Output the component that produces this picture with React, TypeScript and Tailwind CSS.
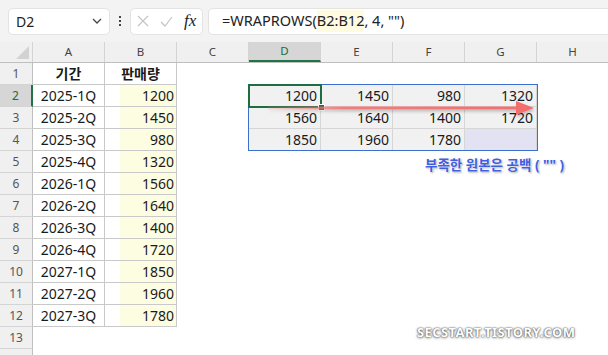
import React from "react";

const cols = ["A", "B", "C", "D", "E", "F", "G", "H"];

const sales: [string, number][] = [
  ["2025-1Q", 1200],
  ["2025-2Q", 1450],
  ["2025-3Q", 980],
  ["2025-4Q", 1320],
  ["2026-1Q", 1560],
  ["2026-2Q", 1640],
  ["2026-3Q", 1400],
  ["2026-4Q", 1720],
  ["2027-1Q", 1850],
  ["2027-2Q", 1960],
  ["2027-3Q", 1780],
];

const spill: (number | null)[][] = [
  [1200, 1450, 980, 1320],
  [1560, 1640, 1400, 1720],
  [1850, 1960, 1780, null],
];

function Toolbar() {
  return (
    <div className="h-[42px] bg-[#f3f3f3] flex items-center pl-[8px] overflow-hidden">
      <div className="w-[102px] h-[27px] shrink-0 bg-white border border-[#e3e3e3] rounded-[5px] flex items-center justify-between pl-[7px] pr-[7px]">
        <span className="text-[14px] text-[#222]">D2</span>
        <svg width="10" height="6" viewBox="0 0 10 6" fill="none">
          <path d="M1 1 L5 5 L9 1" stroke="#444" strokeWidth="1.3" />
        </svg>
      </div>
      <div className="w-[20px] shrink-0 flex flex-col items-center gap-[2px]">
        <span className="w-[2px] h-[2px] bg-[#444]" />
        <span className="w-[2px] h-[2px] bg-[#444]" />
        <span className="w-[2px] h-[2px] bg-[#444]" />
      </div>
      <div className="w-[73px] h-[27px] shrink-0 bg-white border border-[#e3e3e3] rounded-[5px] flex items-center pl-[6px] gap-[11px]">
        <svg width="12" height="12" viewBox="0 0 12 12" fill="none">
          <path d="M1 1 L11 11 M11 1 L1 11" stroke="#c4c4c4" strokeWidth="1.2" />
        </svg>
        <svg width="13" height="11" viewBox="0 0 13 11" fill="none">
          <path d="M1 6 L5 10 L12 1" stroke="#c4c4c4" strokeWidth="1.2" />
        </svg>
        <span className="font-['Liberation_Serif',serif] italic text-[17px] text-[#222] leading-none -mt-[2px]">
          fx
        </span>
      </div>
      <div className="ml-[5px] flex-1 min-w-[420px] h-[27px] bg-white border border-[#e3e3e3] rounded-l-[5px] flex items-center pl-[13px] text-[14.5px] text-[#222]">
        <span>=WRAPROWS(</span>
        <span className="bg-[#fffbe0]">B2:B12</span>
        <span>, 4, "")</span>
      </div>
    </div>
  );
}

function HeaderRow() {
  return (
    <div className="flex h-[21px] bg-[#f0f0f0] border-b border-[#bfbfbf]">
      <div className="w-[33px] shrink-0 relative border-r border-[#d4d4d4]">
        <svg className="absolute right-[3px] bottom-[3px]" width="13" height="13" viewBox="0 0 13 13">
          <path d="M13 0 L13 13 L0 13 Z" fill="#d2d2d2" />
        </svg>
      </div>
      {cols.map((c) => (
        <div
          key={c}
          className={
            c === "D"
              ? "w-[72px] shrink-0 flex items-center justify-center text-[11.5px] text-[#1e6b40] bg-[#d6d6d6] border-b-2 border-[#217346] border-r border-r-[#d4d4d4]"
              : "w-[72px] shrink-0 flex items-center justify-center text-[11.5px] text-[#444] border-r border-[#d4d4d4]"
          }
        >
          {c}
        </div>
      ))}
    </div>
  );
}

function RowHead({ n }: { n: number }) {
  return (
    <div
      className={
        n === 2
          ? "w-[33px] shrink-0 flex items-center justify-center text-[12px] text-[#1e6b40] bg-[#d6d6d6] border-b border-[#d4d4d4] border-r-2 border-r-[#217346]"
          : "w-[33px] shrink-0 flex items-center justify-center text-[12px] text-[#555] bg-[#f0f0f0] border-b border-[#d4d4d4] border-r border-r-[#bfbfbf]"
      }
    >
      {n <= 13 ? n : null}
    </div>
  );
}

function Row({ n }: { n: number }) {
  const item = n >= 2 && n <= 12 ? sales[n - 2] : null;
  const sp = n >= 2 && n <= 4 ? spill[n - 2] : null;
  return (
    <div className="flex h-[22px] shrink-0">
      <RowHead n={n} />
      {n <= 12 ? (
        <>
          <div className="w-[72px] shrink-0 flex items-center justify-center border-r border-b border-[#c9c9c9] text-[14px] text-[#1a1a1a]">
            {n === 1 ? <span className="font-bold">기간</span> : item?.[0]}
          </div>
          {n === 1 ? (
            <div className="w-[72px] shrink-0 flex items-center justify-center border-r border-b border-[#c9c9c9] text-[14px] font-bold text-[#1a1a1a]">
              판매량
            </div>
          ) : (
            <div className="w-[72px] shrink-0 flex border-r border-b border-[#c9c9c9] text-[14px] text-[#1a1a1a]">
              <div className="w-[15px] shrink-0" />
              <div className="flex-1 bg-[#fdfde2] flex items-center justify-end pr-[2px]">{item?.[1]}</div>
            </div>
          )}
        </>
      ) : (
        <>
          <div className="w-[72px] shrink-0" />
          <div className="w-[72px] shrink-0" />
        </>
      )}
      <div className="w-[72px] shrink-0" />
      {sp ? (
        sp.map((v, i) => (
          <div
            key={i}
            className={
              v === null
                ? "w-[72px] shrink-0 bg-[#e2e2f2] border-r border-b border-[#d6d6d6]"
                : "w-[72px] shrink-0 bg-[#f1f1f1] border-r border-b border-[#d6d6d6] flex items-center justify-end pr-[3px] text-[14px] text-[#1a1a1a]"
            }
          >
            {v}
          </div>
        ))
      ) : (
        <>
          <div className="w-[72px] shrink-0" />
          <div className="w-[72px] shrink-0" />
          <div className="w-[72px] shrink-0" />
          <div className="w-[72px] shrink-0" />
        </>
      )}
      <div className="w-[72px] shrink-0" />
    </div>
  );
}

export default function App() {
  const rows = Array.from({ length: 14 }, (_, i) => i + 1);
  return (
    <div className="w-[608px] h-[355px] overflow-hidden bg-white font-['Noto_Sans','Noto_Sans_CJK_KR',sans-serif]">
      <Toolbar />
      <div className="w-[609px]">
        <HeaderRow />
        <div className="relative flex flex-col">
          {rows.map((n) => (
            <Row key={n} n={n} />
          ))}

          {/* spill range outline */}
          <div className="absolute left-[248px] top-[21px] w-[290px] h-[67px] border-[1.5px] border-[#3d6fd1] pointer-events-none" />
          {/* active cell */}
          <div className="absolute left-[248px] top-[21px] w-[74px] h-[24px] border-2 border-[#1f6e43] pointer-events-none" />
          <div className="absolute left-[318px] top-[41px] w-[7px] h-[7px] bg-[#1f6e43] border border-white" />

          {/* arrow */}
          <svg className="absolute left-[262px] top-[34px]" width="280" height="24" viewBox="0 0 280 24">
            <defs>
              <linearGradient id="arr" x1="0" x2="1" y1="0" y2="0">
                <stop offset="0" stopColor="#f47272" stopOpacity="0.15" />
                <stop offset="0.3" stopColor="#f47272" stopOpacity="0.9" />
                <stop offset="1" stopColor="#f46e6e" />
              </linearGradient>
              <filter id="sh" x="-10%" y="-50%" width="120%" height="200%">
                <feDropShadow dx="1" dy="2" stdDeviation="1.5" floodColor="#000" floodOpacity="0.25" />
              </filter>
            </defs>
            <g filter="url(#sh)">
              <rect x="6" y="9.5" width="252" height="3" fill="url(#arr)" />
              <path d="M254 4 L272 11 L254 18 Z" fill="#f46e6e" />
            </g>
          </svg>

          {/* note */}
          <div className="absolute left-[425px] top-[96px] text-[13.5px] font-bold text-[#3f5ee0] leading-none [text-shadow:0_0_1px_#fff,0_0_2px_#fff,1px_1px_2px_#9a9a9a]">
            부족한 원본은 공백 ( "" )
          </div>

          {/* watermark */}
          <div className="absolute left-[417px] top-[263px] text-[13px] font-bold text-white leading-none tracking-[0.4px] [text-shadow:0_0_1px_#444,0_0_2px_#666,0_1px_3px_#999]">
            SECSTART.TISTORY.COM
          </div>
        </div>
      </div>
    </div>
  );
}
